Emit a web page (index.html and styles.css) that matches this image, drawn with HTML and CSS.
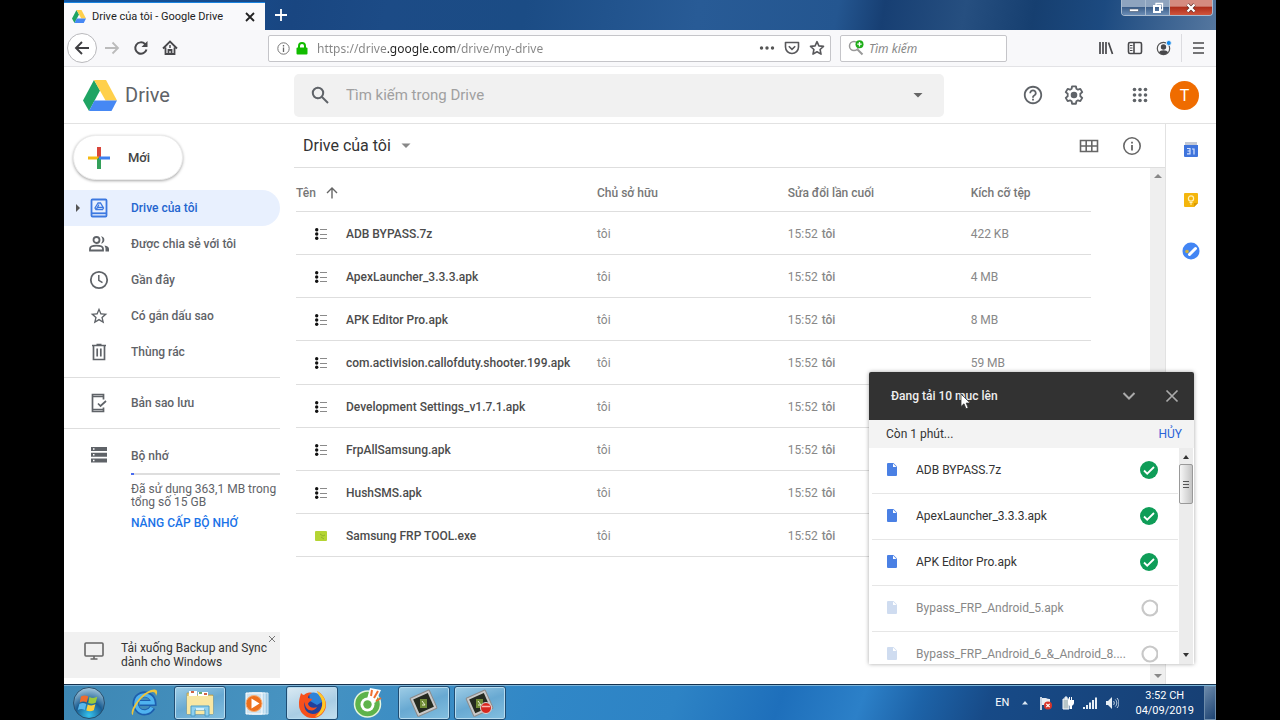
FILE: index.html
```html
<!DOCTYPE html>
<html lang="vi">
<head>
<meta charset="utf-8">
<title>Drive của tôi - Google Drive</title>
<link rel="stylesheet" href="styles.css">
</head>
<body>
<svg class="defs" aria-hidden="true">
  <symbol id="drive" viewBox="0 0 34 31">
    <path fill="#1fa463" d="M11 0 17 10.500 6 31 0 20.500z"/>
    <path fill="#ffd04b" d="M11 0h12l11 20.500H22.500z"/>
    <path fill="#4688f4" d="M11.500 20.500H34L28.500 31H6z"/>
  </symbol>
  <symbol id="list" viewBox="0 0 12 12">
    <circle cx="1.700" cy="1.700" r="1.700" fill="#111"/>
    <circle cx="1.700" cy="6" r="1.700" fill="#111"/>
    <circle cx="1.700" cy="10.300" r="1.700" fill="#111"/>
    <path stroke="#8a8a8a" d="M5 1.500h7M5 6.500h7M5 10.500h7"/>
  </symbol>
  <symbol id="doc" viewBox="0 0 10 13">
    <path fill="currentColor" d="M1 0h5.500L10 3.500V12a1 1 0 0 1-1 1H1a1 1 0 0 1-1-1V1a1 1 0 0 1 1-1z"/>
    <path fill="#fff" d="M6 .5V4h3.500z"/>
  </symbol>
  <symbol id="done" viewBox="0 0 18 18">
    <circle cx="9" cy="9" r="9" fill="#0f9d58"/>
    <path d="m4 9.500 3.200 3.200L14 6" fill="none" stroke="#fff" stroke-width="1.800"/>
  </symbol>
  <symbol id="pending" viewBox="0 0 18 18">
    <circle cx="10" cy="9" r="7.500" fill="none" stroke="#c8c8c8" stroke-width="2.200"/>
  </symbol>
  <symbol id="camtasia" viewBox="0 0 32 32">
    <g transform="rotate(-24 16 16)">
      <rect x="5" y="6" width="21" height="20" rx="1" fill="#c9c9c9" stroke="#8b8b8b"/>
      <rect x="7.500" y="8.500" width="16" height="15" fill="#242a20"/>
    </g>
    <rect x="12" y="12" width="7" height="9" fill="#6f8b35"/>
    <path d="m14 14 3 4h-3" stroke="#eef3d4" fill="none"/>
  </symbol>
</svg>

<div class="desktop">
  <header class="titlebar">
    <div class="tab">
      <svg class="tab-logo"><use href="#drive"/></svg>
      <span class="tab-title">Drive của tôi - Google Drive</span>
      <button class="plain" aria-label="Đóng thẻ"><svg width="10" height="10" viewBox="0 0 10 10"><path d="m1 1 8 8M9 1 1 9" stroke="#222" stroke-width="1.800"/></svg></button>
    </div>
    <button class="plain new-tab" aria-label="Thẻ mới"><svg width="14" height="14" viewBox="0 0 14 14"><path d="M7 1v12M1 7h12" stroke="#fff" stroke-width="1.800"/></svg></button>
    <div class="window-controls">
      <button class="win-btn win-min" aria-label="Thu nhỏ"><svg width="12" height="12" viewBox="0 0 12 12"><path d="M1.500 7h9v2.500h-9z" fill="#fff" stroke="#46566b" stroke-width=".6"/></svg></button>
      <button class="win-btn win-restore" aria-label="Khôi phục"><svg width="12" height="12" viewBox="0 0 12 12"><path d="M4 3V1.500h6.500V8H9" fill="none" stroke="#fff" stroke-width="1.300"/><path d="M2 4h6v6H2z" fill="none" stroke="#fff" stroke-width="2"/></svg></button>
      <button class="win-btn win-close" aria-label="Đóng"><svg width="12" height="12" viewBox="0 0 12 12"><path d="m2.500 2.500 7 7M9.500 2.500l-7 7" stroke="#5c2a25" stroke-width="3.600"/><path d="m2.500 2.500 7 7M9.500 2.500l-7 7" stroke="#fff" stroke-width="2.400"/></svg></button>
    </div>
  </header>

  <div class="toolbar">
    <div class="nav-buttons">
      <button class="plain back" aria-label="Quay lại"><svg width="16" height="16" viewBox="0 0 16 16" fill="none" stroke="#3f3f42" stroke-width="1.900"><path d="M15 8H2M8 2 2 8l6 6"/></svg></button>
      <button class="plain nav-btn" aria-label="Tiến"><svg width="16" height="16" viewBox="0 0 16 16" fill="none" stroke="#bbb" stroke-width="1.800"><path d="M1 8h13M8.500 2.500 14 8l-5.500 5.500"/></svg></button>
      <button class="plain nav-btn" aria-label="Tải lại"><svg width="16" height="16" viewBox="0 0 16 16" fill="none" stroke="#48484b" stroke-width="2"><path d="M13.500 9.500A5.700 5.700 0 1 1 12 4l1 1"/><path d="M14.500 1v6h-6z" fill="#48484b" stroke="none"/></svg></button>
      <button class="plain nav-btn" aria-label="Trang chủ"><svg width="16" height="16" viewBox="0 0 16 16" fill="none" stroke="#48484b" stroke-width="1.800"><path d="m1 8.500 7-7 7 7M3.500 7.500V14h9V7.500"/><path d="M6.500 14v-4h3v4"/><path d="M8 5v3" stroke-width="1.500"/></svg></button>
    </div>
    <div class="url-box">
      <svg width="13" height="13" viewBox="0 0 13 13"><circle cx="6.500" cy="6.500" r="5.700" fill="none" stroke="#777"/><path d="M6.500 5.500V10M6.500 3v1.400" stroke="#666" stroke-width="1.300"/></svg>
      <svg width="12" height="13" viewBox="0 0 12 13"><path d="M3 6V4a3 3 0 0 1 6 0v2" fill="none" stroke="#12bc00" stroke-width="2"/><rect x=".5" y="5.500" width="11" height="7" rx="1" fill="#12bc00"/></svg>
      <input class="url" type="text" aria-label="Địa chỉ" value="https://drive.google.com/drive/my-drive">
      <button class="plain" aria-label="Tác vụ trang"><svg width="16" height="16" viewBox="0 0 16 16" fill="#555"><circle cx="2.500" cy="8" r="1.700"/><circle cx="8" cy="8" r="1.700"/><circle cx="13.500" cy="8" r="1.700"/></svg></button>
      <button class="plain" aria-label="Lưu vào Pocket"><svg width="16" height="16" viewBox="0 0 16 16" fill="none" stroke="#58585b" stroke-width="1.600"><path d="M1.500 2.500h13V7a6.500 6.500 0 0 1-13 0z" stroke-linejoin="round"/><path d="M4.800 6.200 8 9.300l3.200-3.100"/></svg></button>
      <button class="plain" aria-label="Đánh dấu"><svg width="16" height="16" viewBox="0 0 16 16" fill="none" stroke="#58585b" stroke-width="1.600"><path d="m8 1.700 1.900 4.200 4.600.5-3.400 3.100.9 4.600L8 11.800l-4 2.300.9-4.600L1.500 6.400l4.600-.5z" stroke-linejoin="round"/></svg></button>
    </div>
    <div class="find-box">
      <svg width="16" height="16" viewBox="0 0 16 16"><circle cx="6" cy="6" r="4.500" fill="none" stroke="#999" stroke-width="1.500"/><path d="m9.500 9.500 5 5" stroke="#999" stroke-width="2"/><circle cx="11.500" cy="4.200" r="4" fill="#1ead18"/><path d="M11.500 2v4.400M9.300 4.200h4.400" stroke="#fff" stroke-width="1.300"/></svg>
      <input class="find" type="text" aria-label="Tìm kiếm" placeholder="Tìm kiếm">
    </div>
    <div class="browser-actions">
      <button class="plain" aria-label="Thư viện"><svg width="16" height="16" viewBox="0 0 16 16" stroke="#48484b" stroke-width="1.700"><path d="M2 2v12M5 2v12M8 2v12M10.500 2.500l4 11.500"/></svg></button>
      <button class="plain" aria-label="Thanh bên"><svg width="16" height="16" viewBox="0 0 16 16" fill="none" stroke="#48484b" stroke-width="1.600"><rect x="1.500" y="2.500" width="13" height="11" rx="1.500"/><path d="M7 2.500v11"/><path d="M3 5.500h2.500M3 8h2.500M3 10.500h2.500" stroke-width="1"/></svg></button>
      <button class="plain" aria-label="Tài khoản"><svg width="16" height="16" viewBox="0 0 16 16"><circle cx="7.500" cy="8.500" r="6.200" fill="none" stroke="#555" stroke-width="1.200"/><circle cx="7.500" cy="7" r="2.700" fill="#48484b"/><path d="M3 12.500c1-3 8-3 9 0-2 2.500-7 2.500-9 0z" fill="#48484b"/><circle cx="12.800" cy="3" r="2.500" fill="#1389ea" stroke="#f7f7f9" stroke-width=".8"/></svg></button>
      <button class="plain menu-btn" aria-label="Trình đơn"><svg width="16" height="16" viewBox="0 0 16 16" stroke="#48484b" stroke-width="1.600"><path d="M3 3h11M3 8h11M3 13h11"/></svg></button>
    </div>
  </div>

  <div class="app">
    <div class="app-header">
      <a class="brand" href="#"><svg class="brand-logo"><use href="#drive"/></svg><span>Drive</span></a>
      <div class="search">
        <button class="plain" aria-label="Tìm"><svg width="20" height="20" viewBox="0 0 20 20" fill="none" stroke="#5f6368" stroke-width="2"><circle cx="8" cy="8" r="5.200"/><path d="m12 12 6 6"/></svg></button>
        <input class="search-input" type="text" aria-label="Tìm kiếm trong Drive" placeholder="Tìm kiếm trong Drive">
        <button class="plain" aria-label="Tùy chọn tìm kiếm"><svg width="20" height="20" viewBox="0 0 20 20"><path d="M5.500 8h9L10 12.500z" fill="#666"/></svg></button>
      </div>
      <div class="header-actions">
        <button class="plain" aria-label="Trợ giúp"><svg width="22" height="22" viewBox="0 0 24 24" fill="#5f6368"><path d="M11 18h2v-2h-2v2zm1-16C6.480 2 2 6.480 2 12s4.480 10 10 10 10-4.480 10-10S17.520 2 12 2zm0 18c-4.410 0-8-3.590-8-8s3.590-8 8-8 8 3.590 8 8-3.590 8-8 8zm0-14c-2.210 0-4 1.790-4 4h2c0-1.100.9-2 2-2s2 .9 2 2c0 2-3 1.750-3 5h2c0-2.250 3-2.500 3-5 0-2.210-1.790-4-4-4z"/></svg></button>
        <button class="plain gear" aria-label="Cài đặt"><svg width="22" height="22" viewBox="0 0 24 24"><path d="M9.900 2.500h4.200l.5 2.700 1.700 1 2.600-.9L21 8.900l-2.100 1.800v2.600L21 15.100l-2.100 3.600-2.600-.9-1.700 1-.5 2.700H9.900l-.5-2.700-1.700-1-2.600.9L3 15.100l2.100-1.800v-2.600L3 8.900l2.100-3.600 2.600.9 1.700-1z" fill="none" stroke="#5f6368" stroke-width="2" stroke-linejoin="round"/><circle cx="12" cy="12" r="3.600" fill="#5f6368"/></svg></button>
        <button class="plain" aria-label="Ứng dụng"><svg width="22" height="22" viewBox="0 0 22 22" fill="#5f6368"><circle cx="5.500" cy="5.500" r="1.800"/><circle cx="11" cy="5.500" r="1.800"/><circle cx="16.500" cy="5.500" r="1.800"/><circle cx="5.500" cy="11" r="1.800"/><circle cx="11" cy="11" r="1.800"/><circle cx="16.500" cy="11" r="1.800"/><circle cx="5.500" cy="16.500" r="1.800"/><circle cx="11" cy="16.500" r="1.800"/><circle cx="16.500" cy="16.500" r="1.800"/></svg></button>
        <button class="avatar" aria-label="Tài khoản Google">T</button>
      </div>
    </div>

    <div class="app-body">
      <aside class="sidebar">
        <button class="new-btn"><svg width="22" height="22" viewBox="0 0 22 22"><path fill="#d9453a" d="M9 0h4v11H9z"/><path fill="#34a05a" d="M9 11h4v11H9z"/><path fill="#f5b912" d="M0 9.500h11l-2 3H0z"/><path fill="#4080ee" d="M11 9.500h11v3H11z"/></svg>Mới</button>
        <nav class="nav">
          <a class="nav-item active" href="#"><svg class="caret" width="6" height="10" viewBox="0 0 6 10"><path d="M1 1v8l4-4z" fill="#555"/></svg><svg width="20" height="20" viewBox="0 0 20 20" fill="none" stroke="#3c78e0" stroke-width="1.800"><rect x="2.500" y="1.500" width="15" height="17" rx="1"/><path d="M3 15.300h14"/><path d="m9 5-3 5 1 1.500h6.500l1-1.500-3-5zM10 6.500l-2.500 4.500M9 9.300h5" stroke-width="1.300"/></svg><span>Drive của tôi</span></a>
          <a class="nav-item" href="#"><svg width="20" height="20" viewBox="0 0 20 20" fill="none" stroke="#5f6368" stroke-width="1.800"><circle cx="7.500" cy="6" r="3"/><path d="M1 16.500v-1.800c0-4 13-4 13 0v1.800z"/><path d="M12 2.300c4.500.3 4.500 7 0 7.300 2-2 2-5.300 0-7.300zM15.500 11.500c3 .6 4.500 1.800 4.500 3.500v2.400h-3.500V14z" fill="#5f6368" stroke="none"/></svg><span>Được chia sẻ với tôi</span></a>
          <a class="nav-item" href="#"><svg width="20" height="20" viewBox="0 0 20 20" fill="none" stroke="#5f6368" stroke-width="1.800"><circle cx="10" cy="10" r="8.200"/><path d="M9.800 5v5.300l3.700 2.400" stroke-width="1.500"/></svg><span>Gần đây</span></a>
          <a class="nav-item" href="#"><svg width="20" height="20" viewBox="0 0 24 24" fill="#5f6368"><path d="M22 9.240l-7.190-.62L12 2 9.190 8.630 2 9.240l5.460 4.730L5.820 21 12 17.270 18.180 21l-1.630-7.030L22 9.240zM12 15.400l-3.760 2.270 1-4.280-3.320-2.880 4.380-.38L12 6.100l1.710 4.040 4.380.38-3.320 2.880 1 4.280L12 15.400z"/></svg><span>Có gắn dấu sao</span></a>
          <a class="nav-item" href="#"><svg width="20" height="20" viewBox="0 0 20 20" fill="none" stroke="#5f6368" stroke-width="1.700"><path d="M3 3.500h14M7.500 2.500h5M4.500 4v13.500h11V4M8.200 6.500v8M11.800 6.500v8"/></svg><span>Thùng rác</span></a>
        </nav>
        <div class="backup">
          <a class="nav-item" href="#"><svg width="20" height="20" viewBox="0 0 20 20" fill="none" stroke="#5f6368" stroke-width="1.700"><path d="M14.500 6.500v-5h-11v17h11v-4M3.500 3.500h11M3.500 16.500h11"/><path d="m9 10.500 2.500 2.500L17 8"/></svg><span>Bản sao lưu</span></a>
        </div>
        <div class="storage">
          <svg width="20" height="20" viewBox="0 0 20 20"><path d="M2 2h16v4H2zM2 7.700h16v4H2zM2 13.400h16v4H2z" fill="#5f6368"/><path d="M4 3.300h1.500v1.500H4zM4 9h1.500v1.500H4zM4 14.700h1.500v1.500H4z" fill="#fff"/></svg>
          <div class="storage-info">
            <a class="storage-title" href="#">Bộ nhớ</a>
            <div class="meter"><span style="width:2%"></span></div>
            <p>Đã sử dụng 363,1 MB trong tổng số 15 GB</p>
            <a class="upgrade" href="#">NÂNG CẤP BỘ NHỚ</a>
          </div>
        </div>
        <div class="promo">
          <svg class="promo-icon" width="22" height="22" viewBox="0 0 22 22" fill="none" stroke="#666" stroke-width="1.600"><rect x="2" y="3" width="18" height="13" rx="1"/><path d="M7.500 19h7M11 16v3"/></svg>
          <a href="#">Tải xuống Backup and Sync dành cho Windows</a>
          <button class="plain promo-close" aria-label="Đóng"><svg width="8" height="8" viewBox="0 0 8 8"><path d="m1 1 6 6M7 1 1 7" stroke="#777"/></svg></button>
        </div>
      </aside>

      <main class="main">
        <div class="main-head">
          <button class="crumb">Drive của tôi <svg width="10" height="6" viewBox="0 0 10 6"><path d="M.5.500h9L5 5z" fill="#888"/></svg></button>
          <div class="view-actions">
            <button class="plain" aria-label="Xem dạng lưới"><svg width="20" height="20" viewBox="0 0 20 20" fill="none" stroke="#666" stroke-width="1.600"><path d="M1.500 4.500h17v11h-17zM1.500 10h17M7.200 4.500v11M12.800 4.500v11"/></svg></button>
            <button class="plain" aria-label="Chi tiết"><svg width="20" height="20" viewBox="0 0 20 20" fill="none" stroke="#666" stroke-width="1.600"><circle cx="10" cy="10" r="8.200"/><path d="M10 9v5.500M10 5.700v1.800" stroke-width="1.800"/></svg></button>
          </div>
        </div>
        <div class="list-area">
          <div class="list-scroll">
            <table class="files">
              <thead><tr><th class="c-name">Tên <svg width="12" height="12" viewBox="0 0 12 12" fill="none" stroke="#666" stroke-width="1.400"><path d="M6 11.500V1M1 6l5-5 5 5"/></svg></th><th class="c-owner">Chủ sở hữu</th><th class="c-date">Sửa đổi lần cuối</th><th>Kích cỡ tệp</th></tr></thead>
              <tbody>
                <tr><td class="name"><svg class="ficon"><use href="#list"/></svg>ADB BYPASS.7z</td><td>tôi</td><td>15:52 <b>tôi</b></td><td>422 KB</td></tr>
                <tr><td class="name"><svg class="ficon"><use href="#list"/></svg>ApexLauncher_3.3.3.apk</td><td>tôi</td><td>15:52 <b>tôi</b></td><td>4 MB</td></tr>
                <tr><td class="name"><svg class="ficon"><use href="#list"/></svg>APK Editor Pro.apk</td><td>tôi</td><td>15:52 <b>tôi</b></td><td>8 MB</td></tr>
                <tr><td class="name"><svg class="ficon"><use href="#list"/></svg>com.activision.callofduty.shooter.199.apk</td><td>tôi</td><td>15:52 <b>tôi</b></td><td>59 MB</td></tr>
                <tr><td class="name"><svg class="ficon"><use href="#list"/></svg>Development Settings_v1.7.1.apk</td><td>tôi</td><td>15:52 <b>tôi</b></td><td></td></tr>
                <tr><td class="name"><svg class="ficon"><use href="#list"/></svg>FrpAllSamsung.apk</td><td>tôi</td><td>15:52 <b>tôi</b></td><td></td></tr>
                <tr><td class="name"><svg class="ficon"><use href="#list"/></svg>HushSMS.apk</td><td>tôi</td><td>15:52 <b>tôi</b></td><td></td></tr>
                <tr><td class="name"><svg class="ficon" viewBox="0 0 12 12"><rect y="1" width="12" height="10" rx="1" fill="#b4d433"/><path d="m5 4 3 2 2-1M6 7l3 2" stroke="#8fb52a" fill="none"/></svg>Samsung FRP TOOL.exe</td><td>tôi</td><td>15:52 <b>tôi</b></td><td></td></tr>
              </tbody>
            </table>
          </div>
          <div class="scrollbar"><i class="up"></i><i class="down"></i></div>
        </div>
      </main>

      <aside class="side-panel">
        <button class="plain" aria-label="Lịch"><svg width="16" height="16" viewBox="0 0 16 16"><path fill="#c4c9d4" d="M2 0h12v4H2z"/><path fill="#3f74dc" d="M1 3h14v11a1 1 0 0 1-1 1H2a1 1 0 0 1-1-1z"/><path d="M4 6.500h3v5.300H4M4.500 9H7M9 7h2v5.500" fill="none" stroke="#d7e4ff" stroke-width="1.200"/></svg></button>
        <button class="plain" aria-label="Ghi chú"><svg width="16" height="16" viewBox="0 0 16 16"><path fill="#f4b60d" d="M2 1h12a1 1 0 0 1 1 1v9l-4 4H2a1 1 0 0 1-1-1V2a1 1 0 0 1 1-1z"/><path fill="#d99a05" d="M11 11h4l-4 4z"/><circle cx="8" cy="6.500" r="2.600" fill="none" stroke="#fff0b8" stroke-width="1.200"/><path d="M6.500 10.500h3M7 12h2" stroke="#fff0b8"/></svg></button>
        <button class="plain" aria-label="Việc cần làm"><svg width="18" height="18" viewBox="0 0 18 18"><circle cx="9" cy="9" r="8.500" fill="#4285f4"/><path d="m7.500 12.500 6-6" stroke="#fff" stroke-width="3" stroke-linecap="round"/><circle cx="5" cy="9.500" r="1.800" fill="#d0b13d"/></svg></button>
      </aside>

      <section class="upload" aria-label="Tải lên">
        <div class="upload-head">
          <h2>Đang tải 10 mục lên</h2>
          <svg class="pointer" width="11" height="17" viewBox="0 0 11 17"><path d="M1 1v12.500l3-2.700 2 5 2.200-1-2-4.700h4z" fill="#fff" stroke="#333" stroke-width=".8"/></svg>
          <button class="plain" aria-label="Thu gọn"><svg width="16" height="16" viewBox="0 0 16 16" fill="none" stroke="#aaa" stroke-width="2"><path d="m2.500 5 5.500 5.500L13.500 5"/></svg></button>
          <button class="plain" aria-label="Đóng"><svg width="16" height="16" viewBox="0 0 16 16" stroke="#aaa" stroke-width="1.700"><path d="m2.500 2.500 11 11M13.500 2.500l-11 11"/></svg></button>
        </div>
        <div class="upload-status"><span>Còn 1 phút...</span><button class="cancel">HỦY</button></div>
        <div class="upload-body">
          <ul class="upload-list">
            <li><svg class="doc"><use href="#doc"/></svg><span>ADB BYPASS.7z</span><svg class="state"><use href="#done"/></svg></li>
            <li><svg class="doc"><use href="#doc"/></svg><span>ApexLauncher_3.3.3.apk</span><svg class="state"><use href="#done"/></svg></li>
            <li><svg class="doc"><use href="#doc"/></svg><span>APK Editor Pro.apk</span><svg class="state"><use href="#done"/></svg></li>
            <li class="waiting"><svg class="doc"><use href="#doc"/></svg><span>Bypass_FRP_Android_5.apk</span><svg class="state"><use href="#pending"/></svg></li>
            <li class="waiting"><svg class="doc"><use href="#doc"/></svg><span>Bypass_FRP_Android_6_&amp;_Android_8....</span><svg class="state"><use href="#pending"/></svg></li>
          </ul>
          <div class="scrollbar small"><i class="up"></i><b class="thumb"></b><i class="down"></i></div>
        </div>
      </section>
    </div>
  </div>

  <footer class="taskbar">
    <button class="start" aria-label="Start"><svg width="34" height="34" viewBox="0 0 34 34"><defs><radialGradient id="orb" cx=".5" cy=".9" r=".9"><stop offset="0" stop-color="#35c3ee"/><stop offset=".5" stop-color="#1a5d92"/><stop offset="1" stop-color="#a8cbe0"/></radialGradient></defs><circle cx="17" cy="17" r="15.500" fill="url(#orb)" stroke="#284f6d"/><path fill="#ee6b2e" d="M9 10.500c2.500-1.500 5-1.300 7.200 0l-1.500 6c-2.200-1.300-4.700-1.300-7 0z"/><path fill="#9ccb3b" d="M17.500 11c2.500 1.300 5 1.200 7.800-.2l-1.600 6c-2.500 1.400-5.200 1.300-7.500.2z"/><path fill="#58b7ec" d="M7.300 18c2.300-1.300 4.800-1.300 7 0l-1.500 6c-2.200-1.300-4.700-1.300-7 0z"/><path fill="#fbcf3d" d="M15.700 18.500c2.500 1.300 5 1.200 7.700-.2l-1.600 6c-2.500 1.400-5.200 1.300-7.500.2z"/></svg></button>
    <button class="task" aria-label="Internet Explorer"><svg width="32" height="32" viewBox="0 0 32 32"><path d="M24.500 20.500A9 9 0 1 1 25.500 16H11.500" fill="none" stroke="#1d5fae" stroke-width="6"/><path d="M24 20.500A8.500 8.500 0 1 1 25 15.800H11.500" fill="none" stroke="#4fb3f0" stroke-width="3.500"/><path d="M5 28c-5-2 6-21 18-25 7-2 7 2 5 6 0-5-4-5-9-2C10 13 5 23 5 28z" fill="#efc63b"/></svg></button>
    <button class="task open" aria-label="Windows Explorer"><svg width="32" height="32" viewBox="0 0 32 32"><path fill="#e6ce78" stroke="#b49a4c" stroke-width=".7" d="M3 6h8l2 2h16v19H3z"/><path fill="#fff" d="M5 4h8v6H5zM14 5h10v6H14z"/><path fill="#d16345" d="M7 4h3v2H7zM20 6h3v2h-3z"/><path fill="#68a968" d="M15 5h3v2h-3z"/><path fill="#f8e7a3" d="M3 9h26v18H3z"/><path fill="#8fd0ee" stroke="#4a9cc8" d="M7 29V19h18v10h-4v-6H11v6z"/><path fill="#d4f0fb" d="M12 21h8v2h-8z"/></svg></button>
    <button class="task" aria-label="Windows Media Player"><svg width="32" height="32" viewBox="0 0 32 32"><path fill="#9fcbe6" stroke="#d4e8f4" d="M12 6h16v21H12z"/><path fill="#b9d9ec" stroke="#e4f2fa" d="M9 6h16v21H9z"/><path fill="#cfe3ef" stroke="#fff" d="M6 6h16v21H6z"/><circle cx="14" cy="16.500" r="8" fill="#ed701c" stroke="#f6ad73"/><path fill="#fff" d="m11.500 11.500 8 5-8 5z"/></svg></button>
    <button class="task open bright" aria-label="Firefox"><svg width="32" height="32" viewBox="0 0 32 32"><circle cx="16" cy="17" r="11" fill="#22419c"/><path fill="#2d83d8" d="M13 7c6-4 13 1 13 8l-5 3-7-4z"/><path fill="#f7501c" d="M5 6c1 1 2 2 3 2 2-2 5-3 8-2-3 1-4 3-4 5l4 1c0 2-4 3-4 5 1 3 5 5 9 3-3 6-13 4-12-5-2 3 0 12 8 12 7 0 10-7 9-13-1-5-4-8-5-10 6 3 9 9 9 14A13.500 13.500 0 0 1 3 17c0-5 1-7 2-11z"/><path fill="#ffc928" d="M21 4c7 4 10 11 8 17-2 5-5 8-10 9 6-5 8-11 7-16-1-4-4-6-5-10z"/></svg></button>
    <button class="task" aria-label="Cốc Cốc"><svg width="32" height="32" viewBox="0 0 32 32"><circle cx="15.500" cy="17" r="13" fill="#5eb34c" stroke="#e5f5df" stroke-width="1.500"/><path fill="#fff" d="m15 12 3-11 11 2-6 13z"/><circle cx="15.500" cy="17.500" r="7" fill="#fff"/><circle cx="15.500" cy="17.500" r="4.200" fill="#5eb34c"/><path d="m19 9 1-6M22 11l4-7M24 14l5-3" stroke="#ef7030" stroke-width="2"/></svg></button>
    <button class="task open" aria-label="Camtasia"><svg class="cam"><use href="#camtasia"/></svg></button>
    <button class="task open" aria-label="Camtasia Recorder"><svg width="32" height="32" viewBox="0 0 32 32"><use href="#camtasia"/><circle cx="22" cy="21" r="5.500" fill="#d6281f" stroke="#d8d8d8"/><path d="M18 19.500h8" stroke="#ffb5ad" stroke-width="1.500"/></svg></button>
    <div class="tray">
      <span class="lang">EN</span>
      <button class="plain tray-more" aria-label="Biểu tượng ẩn"><svg width="8" height="5" viewBox="0 0 8 5"><path d="m1 4.500 3-3.500 3 3.500z" fill="#dce8f4"/></svg></button>
      <svg width="14" height="14" viewBox="0 0 14 14"><path d="M2 1v13" stroke="#fff" stroke-width="1.500"/><path fill="#e9edf2" d="M3 2h3c2 0 2 1 5 1v6H3z"/><circle cx="9" cy="9.500" r="4" fill="#d8352a"/><path d="m7.300 7.800 3.400 3.400M10.700 7.800l-3.400 3.400" stroke="#fff" stroke-width="1.200"/></svg>
      <svg width="14" height="14" viewBox="0 0 14 14"><path d="M2 3h6v10H2zM4 1h2v2H4z" fill="#b8c6c8" stroke="#f4f7fa"/><path fill="#fff" d="M7 4h1V1h1v3h1V1h1v3h2v3c0 2-2 2-2 3v3H9v-3C7 9 7 8 7 7z"/></svg>
      <svg width="14" height="14" viewBox="0 0 14 14"><path fill="#e6eef5" d="M0 11h2v2H0zM3 9h2v4H3zM6 6.500h2V13H6zM9 4h2v9H9zM12 1.500h2V13h-2z"/></svg>
      <svg width="14" height="14" viewBox="0 0 14 14"><path fill="#e6eef5" d="M1 5h2l4-4v12L3 9H1z"/><path d="M8.500 5c1 1 1 3 0 4M10.300 3.500c2 2 2 5 0 7M12 2c2.500 3 2.500 7 0 10" stroke="#c3d4e4" fill="none"/></svg>
      <div class="clock"><span>3:52 CH</span><span>04/09/2019</span></div>
      <button class="show-desktop" aria-label="Hiện màn hình"></button>
    </div>
  </footer>
</div>
</body>
</html>
```
FILE: styles.css
```css
* { box-sizing: border-box; }

body {
  margin: 0;
  background: #000;
  font-family: Roboto, "Liberation Sans", sans-serif;
  font-size: 12px;
  color: #5f6368;
}

a { color: inherit; text-decoration: none; }
button, input { font: inherit; color: inherit; }
svg { display: block; flex: none; }

.defs { position: absolute; width: 0; height: 0; }

.plain {
  display: flex;
  padding: 0;
  border: 0;
  background: none;
}

.desktop {
  display: flex;
  flex-direction: column;
  min-height: 100vh;
  margin: 0 5%;
  background: #fff;
}

/* Browser title bar */
.titlebar {
  display: flex;
  align-items: flex-start;
  height: 30px;
  padding-right: 3px;
  background: linear-gradient(100deg, #1357a3 0, #194681 20%, #1c4b86 28%, #1b4c85 40%, #285b96 55%, #245690 67%, #173f73 71%, #264f80 78%, #163f70 84%, #1c4a80 90%, #55779f 100%);
}

.tab {
  display: flex;
  align-items: center;
  gap: 6px;
  width: 201px;
  height: 28px;
  margin-top: 2px;
  padding: 0 10px 0 8px;
  border-top: 1px solid #1a84e0;
  background: #f9f9fb;
}

.tab-logo { width: 14px; height: 13px; }

.tab-title {
  flex: 1;
  font-size: 11px;
  white-space: nowrap;
  color: #222;
}

.new-tab { padding: 8px 9px; }

.window-controls {
  display: flex;
  margin-left: auto;
  border: 1px solid #a9bbcf;
  border-top: 0;
  border-radius: 0 0 4px 4px;
  overflow: hidden;
}

.win-btn {
  display: flex;
  align-items: center;
  justify-content: center;
  width: 24px;
  height: 15px;
  padding: 0;
  border: 0;
  border-right: 1px solid #a9bbcf;
  background: linear-gradient(#8ea4bf 0 45%, #3c5f8b 50%, #6b8db5);
}

.win-close {
  width: 42px;
  border-right: 0;
  background: linear-gradient(#d58b80 0 40%, #b02e1c 50%, #d0553c);
}

/* Browser toolbar */
.toolbar {
  display: flex;
  align-items: center;
  height: 37px;
  padding: 0 10px 0 3px;
  border-bottom: 1px solid #e3e3e6;
  background: #f8f8fa;
}

.nav-buttons {
  display: flex;
  align-items: center;
  gap: 13px;
  width: 201px;
}

.back {
  padding: 6px;
  border: 1px solid #b9b9bc;
  border-radius: 50%;
  background: #fff;
}

.nav-btn:nth-child(2) { margin-left: -6px; }

.url-box, .find-box {
  display: flex;
  align-items: center;
  height: 27px;
  border: 1px solid #c5c5c9;
  border-radius: 2px;
  background: #fff;
}

.url-box {
  flex: 1;
  gap: 9px;
  padding: 0 5px 0 8px;
}

.url-box svg + svg { margin-left: -3px; }

.url, .find, .search-input {
  flex: 1;
  min-width: 0;
  padding: 0;
  border: 0;
  outline: 0;
  background: none;
}

.url, .find {
  font-family: "Noto Sans", sans-serif;
  font-size: 12px;
}

.url {
  background: linear-gradient(90deg, #858585 70px, #222 70px, #222 138px, #858585 138px);
  -webkit-background-clip: text;
  background-clip: text;
  color: transparent;
}

.find-box {
  gap: 5px;
  width: 167px;
  margin-left: 9px;
  padding: 0 7px;
}

.find::placeholder { font-style: italic; color: #888; }

.browser-actions {
  display: flex;
  align-items: center;
  gap: 13px;
  margin-left: 91px;
}

.menu-btn {
  margin-left: -4px;
  padding: 6px 0 6px 8px;
  border-left: 1px solid #dcdce0;
}

/* Drive header */
.app {
  display: flex;
  flex: 1;
  flex-direction: column;
}

.app-header {
  display: grid;
  grid-template-columns: 230px 1fr 272px;
  align-items: center;
  height: 57px;
  border-bottom: 1px solid #e2e2e2;
}

.brand {
  display: flex;
  align-items: center;
  gap: 8px;
  padding-left: 19px;
  font-size: 20px;
}

.brand-logo { width: 34px; height: 31px; }

.search {
  display: flex;
  align-items: center;
  gap: 16px;
  height: 43px;
  padding: 0 16px;
  border-radius: 5px;
  background: #f1f1f1;
}

.search-input { font-size: 15px; }
.search-input::placeholder { color: #a0a0a0; }

.header-actions {
  display: flex;
  align-items: center;
  justify-content: flex-end;
  gap: 19px;
  padding-right: 17px;
}

.gear { margin-right: 25px; }

.avatar {
  width: 29px;
  height: 29px;
  padding: 0;
  border: 0;
  border-radius: 50%;
  background: #ef6c00;
  color: #fff;
  font-size: 16px;
}

.app-body {
  position: relative;
  display: flex;
  flex: 1;
}

/* Sidebar */
.sidebar {
  display: flex;
  flex-direction: column;
  width: 216px;
  margin-right: 14px;
  font-weight: 500;
}

.new-btn {
  display: flex;
  align-items: center;
  gap: 18px;
  width: 110px;
  height: 45px;
  margin: 11px 0 10px 9px;
  padding: 0 14px;
  border: 1px solid #ececec;
  border-radius: 23px;
  background: #fff;
  box-shadow: 0 1px 3px rgba(0, 0, 0, .35);
  font-size: 13px;
  color: #444;
}

.nav-item {
  display: flex;
  align-items: center;
  gap: 22px;
  height: 36px;
  padding-left: 25px;
}

.active {
  padding-left: 11px;
  border-radius: 0 18px 18px 0;
  background: #e8f0fe;
  color: #2465cf;
}

.caret { margin-right: -14px; }

.nav { padding-bottom: 7px; }

.backup {
  padding: 7px 0;
  border: solid #dedede;
  border-width: 1px 0;
}

.storage {
  display: flex;
  gap: 22px;
  padding: 16px 0 0 25px;
}

.storage-info { flex: 1; }
.storage-title { line-height: 22px; }

.meter {
  height: 2px;
  margin: 6px 0 8px;
  background: #dedede;
}

.meter span {
  display: block;
  height: 2px;
  background: #4a6cf0;
}

.storage p {
  margin: 0 0 7px;
  font-weight: 400;
  line-height: 13px;
}

.upgrade { line-height: 14px; color: #1a73e8; }

.promo {
  position: relative;
  display: flex;
  align-items: center;
  gap: 16px;
  height: 46px;
  margin: auto 0 6px;
  padding: 0 6px 0 19px;
  background: #f1f1f1;
  font-weight: 400;
  line-height: 14px;
  color: #333;
}

.promo-icon { margin-bottom: 8px; }

.promo-close {
  position: absolute;
  top: 3px;
  right: 4px;
}

/* File list */
.main {
  display: flex;
  flex: 1;
  flex-direction: column;
}

.main-head {
  display: flex;
  align-items: center;
  justify-content: space-between;
  height: 44px;
  padding: 0 23px 0 9px;
  border-bottom: 1px solid #dedede;
}

.crumb {
  display: flex;
  align-items: center;
  gap: 10px;
  padding: 0;
  border: 0;
  background: none;
  font-size: 16px;
  color: #333;
}

.view-actions { display: flex; gap: 23px; }

.list-area { display: flex; flex: 1; }

.list-scroll {
  flex: 1;
  padding: 0 59px 0 2px;
}

.files {
  width: 100%;
  height: 389px;
  border-spacing: 0;
  table-layout: fixed;
}

.files th, .files td {
  padding: 2px 0 0;
  border-bottom: 1px solid #dedede;
  text-align: left;
}

.files th {
  height: 44px;
  padding-top: 7px;
  font-weight: 500;
  color: #777;
}

.files td { color: #888; }
.files td b { font-weight: 500; margin-left: 1px; color: #888; }
.files td.name { font-weight: 500; color: #4c4c4c; }
.files svg { display: inline-block; vertical-align: -2px; }
.files th svg { margin-left: 7px; }

.c-name { width: 301px; }
.c-owner { width: 24%; }
.c-date { width: 23%; }

.ficon {
  width: 12px;
  height: 12px;
  margin: 0 19px;
}

.scrollbar {
  display: flex;
  flex: none;
  flex-direction: column;
  align-items: center;
  width: 15px;
  padding: 6px 0;
  background: #efefef;
}

.up, .down { border: solid transparent; border-width: 0 4px; }
.up { border-bottom: 4px solid #888; }
.down { margin-top: auto; border-top: 4px solid #888; }

.side-panel {
  display: flex;
  flex-direction: column;
  align-items: center;
  gap: 34px;
  width: 51px;
  padding-top: 18px;
  border-left: 1px solid #e2e2e2;
}

/* Upload panel floats over the list */
.upload {
  position: absolute;
  right: 22px;
  bottom: 20px;
  width: 325px;
  border-radius: 2px 2px 0 0;
  background: #fff;
  box-shadow: 0 0 4px rgba(0, 0, 0, .35);
  color: #333;
}

.upload-head {
  position: relative;
  display: flex;
  align-items: center;
  gap: 27px;
  height: 48px;
  padding: 0 14px 0 22px;
  border-radius: 2px 2px 0 0;
  background: #323232;
  color: #eee;
}

.upload-head h2 {
  flex: 1;
  margin: 0;
  font-size: 12px;
  font-weight: 500;
}

.pointer {
  position: absolute;
  top: 21px;
  left: 91px;
}

.upload-status {
  display: flex;
  align-items: center;
  justify-content: space-between;
  height: 28px;
  padding: 0 12px 0 17px;
  background: #f3f3f3;
}

.cancel {
  padding: 0;
  border: 0;
  background: none;
  color: #2a64d8;
}

.upload-body {
  display: flex;
  height: 216px;
  padding-right: 1px;
  overflow: hidden;
}

.upload-list {
  flex: 1;
  min-width: 0;
  margin: 0;
  padding: 0 1px 0 3px;
  list-style: none;
}

.upload-list li {
  display: flex;
  align-items: center;
  gap: 19px;
  height: 46px;
  padding: 0 20px 2px 15px;
  border-bottom: 1px solid #e6e6e6;
}

.upload-list span {
  flex: 1;
  min-width: 0;
  white-space: nowrap;
}

.doc { width: 10px; height: 13px; color: #4a80e4; }
.state { width: 18px; height: 18px; }
.waiting { color: #888; }
.waiting .doc { color: #cfdcf0; }

.small { width: 14px; padding: 7px 0; background: #ececec; }
.small .up { border-bottom-color: #333; }
.small .down { border-top-color: #333; }
.small .up, .small .down { border-left-width: 3px; border-right-width: 3px; }

.thumb {
  width: 14px;
  height: 40px;
  margin-top: 5px;
  border: 1px solid #999;
  border-radius: 2px;
  background:
    repeating-linear-gradient(#555 0 1px, transparent 1px 3px) center / 6px 7px no-repeat,
    linear-gradient(90deg, #f6f6f6, #c4c4c4);
}

/* Windows taskbar */
.taskbar {
  display: flex;
  align-items: center;
  gap: 4px;
  height: 36px;
  border-top: 1px solid #16324e;
  background: linear-gradient(110deg, #3d87b4 0, #4793c1 20%, #3087c7 42%, #2d83c5 53%, #1e6fbb 62%, #2c80c8 69%, #1d63a8 74%, #174a87 80%, #173f73 100%);
  box-shadow: inset 0 1px #7cb4d8;
}

.start {
  display: flex;
  justify-content: center;
  width: 50px;
  padding: 0;
  border: 0;
  background: none;
}

.task {
  display: flex;
  align-items: center;
  justify-content: center;
  width: 52px;
  height: 34px;
  padding: 0;
  border: 1px solid transparent;
  border-radius: 3px;
  background: none;
}

.open {
  border-color: #1f4c72;
  background: linear-gradient(160deg, #9fcde6, #68a9d2 50%, #83bfe0);
  box-shadow: inset 0 0 0 1px #b7dcf0;
}

.bright { background: linear-gradient(160deg, #dbeaf3, #a9cde4 60%, #c3e0ef); }

.cam { width: 32px; height: 32px; }

.tray {
  display: flex;
  align-items: center;
  gap: 8px;
  margin-left: auto;
  font-size: 11px;
  color: #fff;
}

.lang { margin-right: 4px; }
.tray-more { margin-right: 2px; }

.clock {
  display: flex;
  flex-direction: column;
  align-items: center;
  margin: 0 2px 0 8px;
  line-height: 15px;
}

.show-desktop {
  width: 12px;
  height: 34px;
  padding: 0;
  border: 1px solid #6d8cab;
  background: linear-gradient(135deg, #6b89aa, #1d4372);
}
```
